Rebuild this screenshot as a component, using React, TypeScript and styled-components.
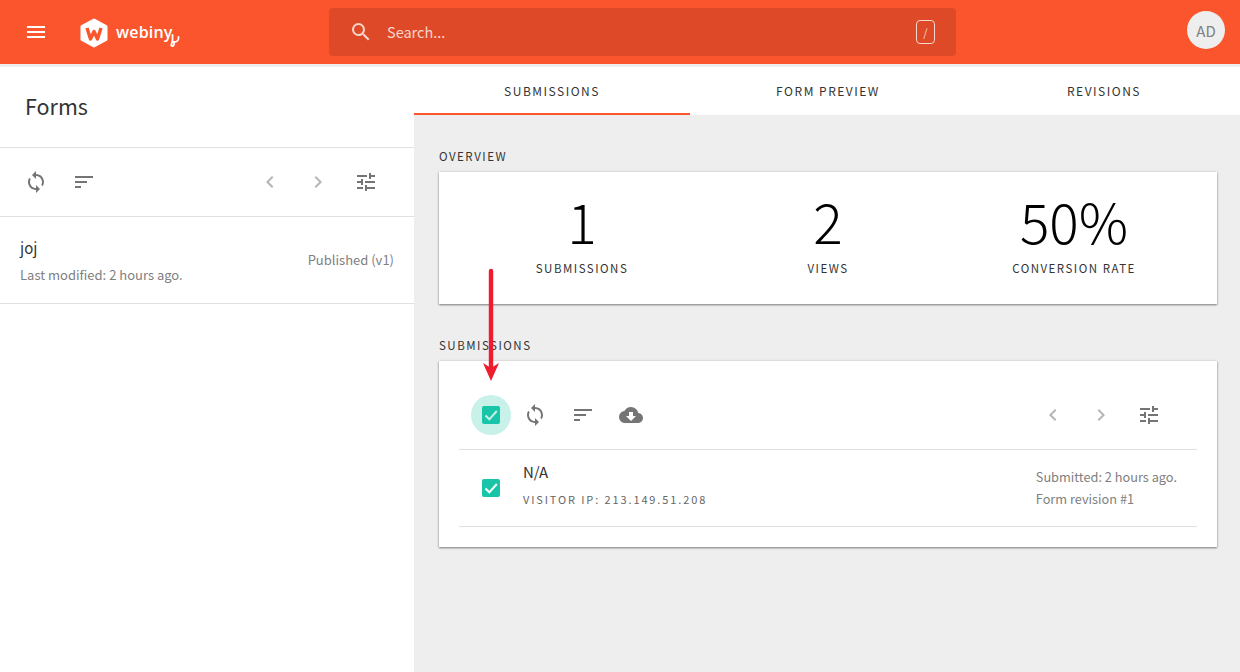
import React from "react";
import styled, { createGlobalStyle } from "styled-components";
import {
  MdChevronLeft,
  MdChevronRight,
  MdCloudDownload,
  MdMenu,
  MdSearch,
  MdSort,
  MdSync,
  MdTune,
} from "react-icons/md";

const GlobalStyle = createGlobalStyle`
  html, body {
    margin: 0;
    height: 100%;
    overflow: hidden;
    background: #eeeeee;
    font-family: "Noto Sans CJK SC", "Noto Sans", sans-serif;
    color: #333;
  }
  * { box-sizing: border-box; }
`;

const Page = styled.div`
  position: relative;
  width: 1240px;
  height: 672px;
  overflow: hidden;
`;

const Header = styled.header`
  display: flex;
  align-items: center;
  height: 64px;
  padding: 0 15px 0 12px;
  background: #fa552c;
  color: #fff;
`;

const MenuButton = styled.div`
  display: flex;
  width: 48px;
  justify-content: center;
  font-size: 24px;
  line-height: 0;
`;

const Logo = styled.div`
  display: flex;
  align-items: center;
  width: 269px;
  padding: 2px 0 0 20px;
`;

const LogoText = styled.span`
  margin: -2px 0 0 8px;
  font-family: "Open Sans", sans-serif;
  font-size: 16px;
  font-weight: 600;
  line-height: 24px;
  letter-spacing: 0.2px;
`;

const LogoTail = styled.svg`
  margin: 12px 0 0 -6px;
`;

const SearchBox = styled.div`
  display: flex;
  align-items: center;
  width: 627px;
  height: 48px;
  padding: 0 21px 0 20px;
  border-radius: 4px;
  background: #de4a27;
  color: #f7d6cc;
  font-size: 24px;
`;

const SearchText = styled.span`
  flex: 1;
  margin-left: 14px;
  font-size: 14.5px;
  line-height: 20px;
`;

const KeyHint = styled.span`
  display: flex;
  width: 19px;
  height: 24px;
  align-items: center;
  justify-content: center;
  border: 1px solid #f7d6cc;
  border-radius: 4px;
  font-size: 11px;
`;

const Avatar = styled.div`
  display: flex;
  width: 38px;
  height: 38px;
  margin: -4px 0 0 auto;
  align-items: center;
  justify-content: center;
  border-radius: 50%;
  background: #eeeeee;
  color: #808080;
  font-size: 15px;
`;

const Body = styled.div`
  display: flex;
  height: 608px;
  margin-top: 3px;
`;

const Sidebar = styled.aside`
  flex: 0 0 414px;
  height: 100%;
  background: #fff;
`;

const SidebarTitle = styled.h1`
  display: flex;
  align-items: center;
  height: 81px;
  margin: 0;
  padding: 0 25px 2px;
  border-bottom: 1px solid #e0e0e0;
  font-size: 21.5px;
  font-weight: 400;
  line-height: 30px;
`;

const Toolbar = styled.div<{ $height: number; $top?: number }>`
  display: flex;
  align-items: center;
  height: ${(p) => p.$height}px;
  padding: ${(p) => p.$top ?? 0}px 24px 0 12px;
  border-bottom: 1px solid #e0e0e0;
`;

const ToolButton = styled.div<{ $disabled?: boolean }>`
  display: flex;
  width: 48px;
  justify-content: center;
  color: ${(p) => (p.$disabled ? "#b5b5b5" : "#757575")};
  font-size: 24px;
  line-height: 0;
`;

const Spacer = styled.div`
  flex: 1;
`;

const FormRow = styled.div`
  display: flex;
  align-items: center;
  justify-content: space-between;
  height: 87px;
  padding: 0 20px;
  border-bottom: 1px solid #e0e0e0;
`;

const FormInfo = styled.div`
  padding-top: 3px;
`;

const RowTitle = styled.div<{ $gap: number }>`
  margin-bottom: ${(p) => p.$gap}px;
  font-size: 15px;
  line-height: 20px;
`;

const MutedText = styled.div`
  color: #808080;
  font-size: 13px;
  line-height: 22px;
`;

const Main = styled.main`
  flex: 1;
  min-width: 0;
`;

const Tabs = styled.nav`
  display: flex;
  height: 48px;
  background: #fff;
`;

const Tab = styled.div<{ $active?: boolean }>`
  display: flex;
  flex: 0 0 276px;
  align-items: center;
  justify-content: center;
  border-bottom: 2px solid ${(p) => (p.$active ? "#fa552c" : "transparent")};
  padding-top: 1px;
  font-size: 12px;
  letter-spacing: 1.5px;
`;

const Content = styled.div`
  padding: 33px 23px 0 25px;
`;

const SectionLabel = styled.div`
  margin-bottom: 7px;
  font-size: 11.5px;
  line-height: 17px;
  letter-spacing: 1.5px;
`;

const Card = styled.section`
  margin-bottom: 33px;
  padding: 0 20px;
  background: #fff;
  box-shadow: 0 1px 2px rgba(0, 0, 0, 0.45), 0 0 3px rgba(0, 0, 0, 0.1);
`;

const Stats = styled.div`
  display: grid;
  grid-template-columns: repeat(3, 1fr);
  height: 132px;
`;

const Stat = styled.div`
  padding-top: 18px;
  text-align: center;
`;

const StatValue = styled.div`
  color: #000;
  font-size: 55px;
  font-weight: 300;
  line-height: 60px;
`;

const StatLabel = styled.div`
  margin-top: 10px;
  font-size: 11.5px;
  line-height: 16px;
  letter-spacing: 1.5px;
`;

const CheckWrap = styled.div<{ $halo?: boolean }>`
  display: flex;
  width: 40px;
  height: 40px;
  align-items: center;
  justify-content: center;
  border-radius: 50%;
  background: ${(p) => (p.$halo ? "#c8f1e9" : "transparent")};
`;

const CheckBox = styled.div`
  display: flex;
  width: 18px;
  height: 18px;
  align-items: center;
  justify-content: center;
  border-radius: 2px;
  background: #18c5a8;
`;

const SubmissionRow = styled.div`
  display: flex;
  align-items: center;
  height: 77px;
  padding: 0 20px 0 12px;
  border-bottom: 1px solid #e0e0e0;
`;

const SubmissionInfo = styled.div`
  flex: 1;
  margin-left: 12px;
  padding-bottom: 7px;
`;

const SubmissionMeta = styled.div`
  ${MutedText} {
    font-size: 12.75px;
  }
`;

const IpText = styled.div`
  color: #666;
  font-size: 11px;
  line-height: 16px;
  letter-spacing: 1.88px;
`;

const CardFoot = styled.div`
  height: 20px;
`;

const Arrow = styled.svg`
  position: absolute;
  left: 481px;
  top: 268px;
`;

const Check = ({ tick = "#fff" }: { tick?: string }) => (
  <CheckBox>
    <svg width="14" height="14" viewBox="0 0 14 14" fill="none">
      <path d="M1.500 7.500 5.300 11.300 12.800 3" stroke={tick} strokeWidth="2" />
    </svg>
  </CheckBox>
);

const App = () => (
  <Page>
    <GlobalStyle />
    <Header>
      <MenuButton>
        <MdMenu />
      </MenuButton>
      <Logo>
        <svg width="28" height="30" viewBox="0 0 28 30">
          <path
            d="M14 2 26 8.500V21.500L14 28 2 21.500V8.500Z"
            fill="#fff"
            stroke="#fff"
            strokeWidth="3"
            strokeLinejoin="round"
          />
          <path
            d="M7 10 10.500 21 14 13.500 17.500 21 21 10"
            fill="none"
            stroke="#fa552c"
            strokeWidth="3.400"
            strokeLinejoin="round"
          />
        </svg>
        <LogoText>webiny</LogoText>
        <LogoTail width="14" height="15" viewBox="0 0 14 15" fill="none">
          <path
            d="M5.500 3V8.500C5.500 11 3 13.500 5 14C7.500 14.500 7.500 10 6 9.500C9 10.500 12 9 11.500 5"
            stroke="#fff"
            strokeWidth="1.800"
            strokeLinecap="round"
          />
        </LogoTail>
      </Logo>
      <SearchBox>
        <MdSearch />
        <SearchText>Search...</SearchText>
        <KeyHint>/</KeyHint>
      </SearchBox>
      <Avatar>AD</Avatar>
    </Header>
    <Body>
      <Sidebar>
        <SidebarTitle>Forms</SidebarTitle>
        <Toolbar $height={69}>
          <ToolButton>
            <MdSync />
          </ToolButton>
          <ToolButton>
            <MdSort />
          </ToolButton>
          <Spacer />
          <ToolButton $disabled>
            <MdChevronLeft />
          </ToolButton>
          <ToolButton $disabled>
            <MdChevronRight />
          </ToolButton>
          <ToolButton>
            <MdTune />
          </ToolButton>
        </Toolbar>
        <FormRow>
          <FormInfo>
            <RowTitle $gap={6}>joj</RowTitle>
            <MutedText>Last modified: 2 hours ago.</MutedText>
          </FormInfo>
          <MutedText>Published (v1)</MutedText>
        </FormRow>
      </Sidebar>
      <Main>
        <Tabs>
          <Tab $active>SUBMISSIONS</Tab>
          <Tab>FORM PREVIEW</Tab>
          <Tab>REVISIONS</Tab>
        </Tabs>
        <Content>
          <SectionLabel>OVERVIEW</SectionLabel>
          <Card>
            <Stats>
              <Stat>
                <StatValue>1</StatValue>
                <StatLabel>SUBMISSIONS</StatLabel>
              </Stat>
              <Stat>
                <StatValue>2</StatValue>
                <StatLabel>VIEWS</StatLabel>
              </Stat>
              <Stat>
                <StatValue>50%</StatValue>
                <StatLabel>CONVERSION RATE</StatLabel>
              </Stat>
            </Stats>
          </Card>
          <SectionLabel>SUBMISSIONS</SectionLabel>
          <Card>
            <Toolbar $height={89} $top={20}>
              <CheckWrap $halo>
                <Check tick="#c8f1e9" />
              </CheckWrap>
              <ToolButton>
                <MdSync />
              </ToolButton>
              <ToolButton>
                <MdSort />
              </ToolButton>
              <ToolButton>
                <MdCloudDownload />
              </ToolButton>
              <Spacer />
              <ToolButton $disabled>
                <MdChevronLeft />
              </ToolButton>
              <ToolButton $disabled>
                <MdChevronRight />
              </ToolButton>
              <ToolButton>
                <MdTune />
              </ToolButton>
            </Toolbar>
            <SubmissionRow>
              <CheckWrap>
                <Check />
              </CheckWrap>
              <SubmissionInfo>
                <RowTitle $gap={9}>N/A</RowTitle>
                <IpText>VISITOR IP: 213.149.51.208</IpText>
              </SubmissionInfo>
              <SubmissionMeta>
                <MutedText>Submitted: 2 hours ago.</MutedText>
                <MutedText>Form revision #1</MutedText>
              </SubmissionMeta>
            </SubmissionRow>
            <CardFoot />
          </Card>
        </Content>
      </Main>
    </Body>
    <Arrow width="20" height="116" viewBox="0 0 20 116">
      <path d="M10 3V100" stroke="#ee1c2e" strokeWidth="4.400" strokeLinecap="round" />
      <path d="M2 95 10 113 18 95 10 100Z" fill="#ee1c2e" />
    </Arrow>
  </Page>
);

export default App;
